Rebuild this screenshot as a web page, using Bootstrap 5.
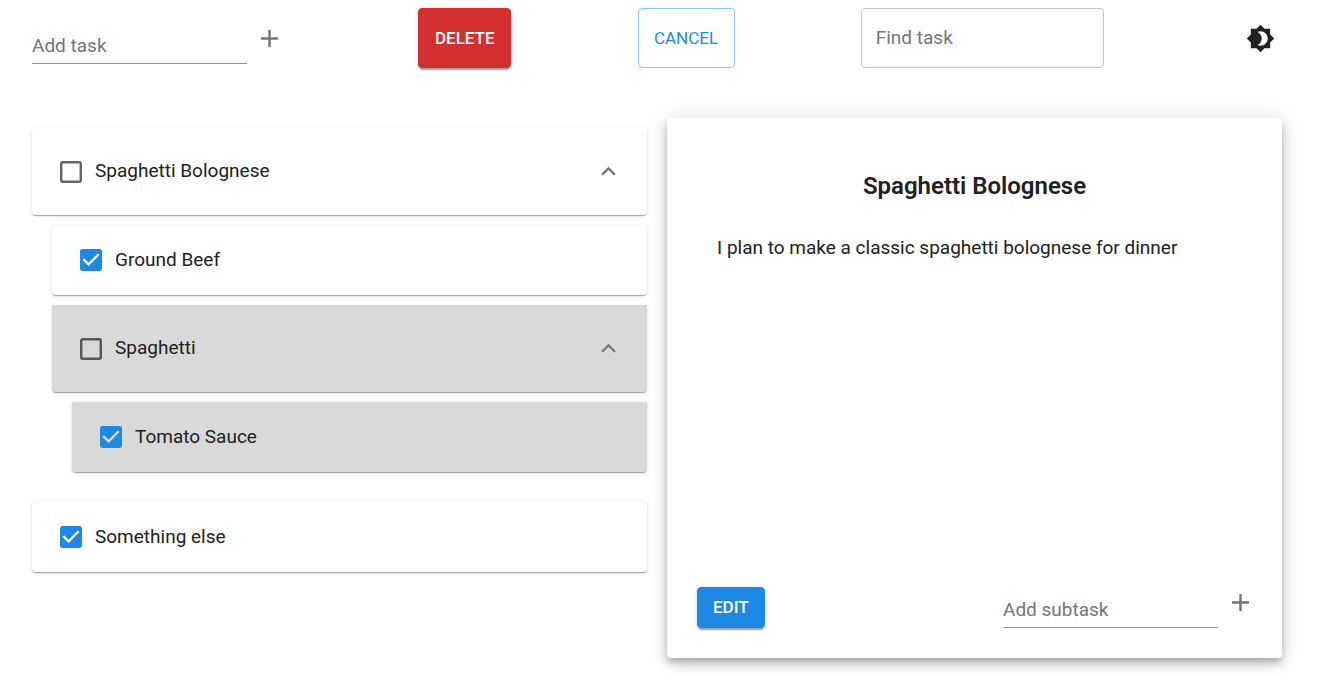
<!DOCTYPE html>
<html lang="en">
<head>
<meta charset="utf-8">
<meta name="viewport" content="width=device-width, initial-scale=1">
<title>Tasks</title>
<link href="https://cdn.jsdelivr.net/npm/bootstrap@5.3.0/dist/css/bootstrap.min.css" rel="stylesheet">
<style>
  :root { --blue: #1e88e5; --ink: #212121; --icon: #757575; }
  body { font-family: Roboto, sans-serif; font-size: 19px; line-height: 28px; color: var(--ink); }
  .toolbar { padding: 8px 46px 0 32px; }
  .workspace { padding: 50px 55px 16px 32px; }
  .workspace .row { --bs-gutter-x: 20px; }
  .text-line { width: 215px; height: 41px; padding: 4px 0 0; border: 0; border-bottom: 1px solid #949494; border-radius: 0; font-size: 19px; background: none; color: var(--ink); }
  .toolbar form { padding-top: 15px; height: 60px; }
  .search-box { width: 243px; height: 60px; padding: 0 14px 2px; border: 1px solid #c4c4c4; border-radius: 4px; font-size: 19px; }
  .form-control::placeholder { color: #757575; opacity: 1; }
  .icon-btn { padding: 1px 8px 0; border: 0; background: none; color: var(--icon); line-height: 0; }
  .icon-btn svg { width: 29px; height: 29px; fill: currentColor; }
  .theme-btn { padding: 0 16px; color: var(--ink); }
  .caps-btn { padding: 0 15px; border-radius: 4px; font-size: 17px; font-weight: 500; text-transform: uppercase; }
  .bar-btn { height: 60px; padding-top: 2px; }
  .lifted { box-shadow: 0 4px 1px -2px rgba(0,0,0,.2), 0 2px 2px rgba(0,0,0,.14), 0 1px 5px rgba(0,0,0,.12); }
  .btn-delete { --bs-btn-bg: #d32f2f; --bs-btn-color: #fff; --bs-btn-border-color: #d32f2f; --bs-btn-hover-bg: #c62828; --bs-btn-hover-color: #fff; min-width: 93px; }
  .btn-cancel { --bs-btn-color: var(--blue); --bs-btn-border-color: #8fc4f2; --bs-btn-hover-color: var(--blue); --bs-btn-hover-border-color: var(--blue); min-width: 97px; font-weight: 400; }
  .btn-edit { --bs-btn-bg: var(--blue); --bs-btn-color: #fff; --bs-btn-border-color: var(--blue); --bs-btn-hover-bg: #1565c0; --bs-btn-hover-color: #fff; height: 41px; }
  .task-list { padding-top: 10px; gap: 30px; }
  .task-group { gap: 10px; }
  .task { min-height: 70px; padding: 0 24px 0 28px; border-radius: 4px; background: #fff;
    box-shadow: 0 2px 1px -1px rgba(0,0,0,.2), 0 1px 1px rgba(0,0,0,.14), 0 1px 4px rgba(0,0,0,.12); }
  .task-parent { min-height: 87px; }
  .task-picked { background: #d9d9d9; border-radius: 0 0 4px 4px; }
  .subtasks { margin-left: 20px; gap: 10px; }
  .form-check-input.tick { width: 22px; height: 22px; margin: 0; border: 0; border-radius: 0; background-color: transparent; background-size: 22px 22px;
    background-image: url("data:image/svg+xml,%3Csvg xmlns='http://www.w3.org/2000/svg' viewBox='3 3 18 18'%3E%3Cpath fill='%23000' fill-opacity='.6' d='M19 5v14H5V5h14m0-2H5c-1.1 0-2 .9-2 2v14c0 1.1.9 2 2 2h14c1.1 0 2-.9 2-2V5c0-1.1-.9-2-2-2z'/%3E%3C/svg%3E"); }
  .form-check-input.tick:checked { background-color: transparent;
    background-image: url("data:image/svg+xml,%3Csvg xmlns='http://www.w3.org/2000/svg' viewBox='3 3 18 18'%3E%3Cpath fill='%231e88e5' d='M19 3H5c-1.11 0-2 .9-2 2v14c0 1.1.89 2 2 2h14c1.11 0 2-.9 2-2V5c0-1.1-.89-2-2-2zm-9 14l-5-5 1.41-1.41L10 14.17l7.59-7.59L19 8l-9 9z'/%3E%3C/svg%3E"); }
  .task-name { padding: 0 0 1px 13px; }
  .detail { min-height: 540px; padding: 50px 0 30px; border-radius: 4px; background: #fff;
    box-shadow: 0 4px 6px -1px rgba(0,0,0,.2), 0 7px 12px rgba(0,0,0,.14), 0 1px 22px rgba(0,0,0,.12); }
  .detail h2 { font-size: 24px; line-height: 36px; font-weight: 600; margin-bottom: 30px; }
  .detail p { padding: 0 50px; }
  .detail-foot { padding: 0 19px 0 30px; }
</style>
</head>
<body>
<header class="toolbar d-flex justify-content-between align-items-center">
  <form class="d-flex align-items-start">
    <input class="form-control text-line" type="text" placeholder="Add task" aria-label="Add task">
    <button class="icon-btn" type="button" aria-label="Add"><svg viewBox="0 0 24 24"><path d="M19 13h-6v6h-2v-6H5v-2h6V5h2v6h6v2z"/></svg></button>
  </form>
  <button class="btn btn-delete caps-btn bar-btn lifted" type="button">Delete</button>
  <button class="btn btn-cancel caps-btn bar-btn" type="button">Cancel</button>
  <input class="form-control search-box" type="text" placeholder="Find task" aria-label="Find task">
  <button class="icon-btn theme-btn" type="button" aria-label="Toggle theme"><svg viewBox="0 0 24 24"><path d="M20 8.69V4h-4.69L12 .69 8.69 4H4v4.69L.69 12 4 15.31V20h4.69L12 23.31 15.31 20H20v-4.69L23.31 12 20 8.69zM12 18c-.89 0-1.74-.2-2.5-.55C11.56 16.5 13 14.42 13 12s-1.44-4.5-3.5-5.45C10.26 6.2 11.11 6 12 6c3.31 0 6 2.69 6 6s-2.69 6-6 6z"/></svg></button>
</header>

<main class="workspace">
  <div class="row">
    <section class="col-6">
      <div class="task-list d-flex flex-column">
        <div class="task-group d-flex flex-column">
          <div class="task task-parent d-flex align-items-center">
            <input class="form-check-input tick" type="checkbox" id="t1"><label class="task-name flex-grow-1" for="t1">Spaghetti Bolognese</label>
            <button class="icon-btn p-0" type="button" aria-label="Collapse"><svg viewBox="0 0 24 24"><path d="M12 8l-6 6 1.41 1.41L12 10.83l4.59 4.58L18 14z"/></svg></button>
          </div>
          <div class="subtasks d-flex flex-column">
            <div class="task d-flex align-items-center">
              <input class="form-check-input tick" type="checkbox" id="t2" checked><label class="task-name" for="t2">Ground Beef</label>
            </div>
            <div class="task task-parent task-picked d-flex align-items-center">
              <input class="form-check-input tick" type="checkbox" id="t3"><label class="task-name flex-grow-1" for="t3">Spaghetti</label>
              <button class="icon-btn p-0" type="button" aria-label="Collapse"><svg viewBox="0 0 24 24"><path d="M12 8l-6 6 1.41 1.41L12 10.83l4.59 4.58L18 14z"/></svg></button>
            </div>
            <div class="subtasks d-flex flex-column">
              <div class="task task-picked d-flex align-items-center">
                <input class="form-check-input tick" type="checkbox" id="t4" checked><label class="task-name" for="t4">Tomato Sauce</label>
              </div>
            </div>
          </div>
        </div>
        <div class="task d-flex align-items-center">
          <input class="form-check-input tick" type="checkbox" id="t5" checked><label class="task-name" for="t5">Something else</label>
        </div>
      </div>
    </section>
    <section class="col-6">
      <article class="detail d-flex flex-column">
        <h2 class="text-center">Spaghetti Bolognese</h2>
        <p>I plan to make a classic spaghetti bolognese for dinner</p>
        <div class="detail-foot d-flex justify-content-between align-items-end mt-auto">
          <button class="btn btn-edit caps-btn lifted" type="button">Edit</button>
          <form class="d-flex align-items-start">
            <input class="form-control text-line" type="text" placeholder="Add subtask" aria-label="Add subtask">
            <button class="icon-btn" type="button" aria-label="Add subtask"><svg viewBox="0 0 24 24"><path d="M19 13h-6v6h-2v-6H5v-2h6V5h2v6h6v2z"/></svg></button>
          </form>
        </div>
      </article>
    </section>
  </div>
</main>
<script src="https://cdn.jsdelivr.net/npm/bootstrap@5.3.0/dist/js/bootstrap.bundle.min.js"></script>
</body>
</html>
